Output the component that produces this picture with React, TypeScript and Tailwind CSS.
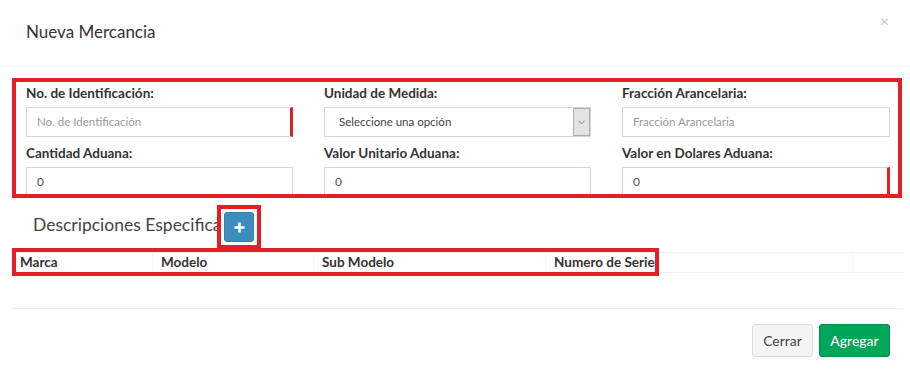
import { ChevronDown } from "lucide-react";

const RED = "border-[#e41e26]";

function Field({
  label,
  value,
  placeholder,
  flagged,
}: {
  label: string;
  value?: string;
  placeholder?: string;
  flagged?: boolean;
}) {
  return (
    <div className="flex flex-col">
      <label className="h-[18px] leading-[18px] text-[13.5px] font-bold text-[#333]">
        {label}
      </label>
      <div
        className={
          "mt-[5px] h-[30px] flex items-center px-[10px] border border-[#d2d6de] bg-white " +
          (flagged ? "border-r-[3px] border-r-[#e41e26]" : "")
        }
      >
        {value ? (
          <span className="text-[12px] text-[#555]">{value}</span>
        ) : (
          <span className="text-[11.5px] text-[#999]">{placeholder}</span>
        )}
      </div>
    </div>
  );
}

function SelectField({ label }: { label: string }) {
  return (
    <div className="flex flex-col">
      <label className="h-[18px] leading-[18px] text-[13.5px] font-bold text-[#333]">
        {label}
      </label>
      <div className="mt-[5px] h-[30px] flex items-stretch border border-[#d2d6de] bg-white">
        <span className="flex-1 flex items-center pl-[14px] text-[11.5px] text-[#444]">
          Seleccione una opción
        </span>
        <span className="w-[17px] flex items-center justify-center bg-[#e3e3e3] border border-[#adadad]">
          <ChevronDown size={11} strokeWidth={1.5} className="text-[#555]" />
        </span>
      </div>
    </div>
  );
}

const columns = [
  { name: "Marca", w: "w-[140px]" },
  { name: "Modelo", w: "w-[161px]" },
  { name: "Sub Modelo", w: "w-[232px]" },
  { name: "Numero de Serie", w: "w-[114px]" },
  { name: "", w: "w-[193px]" },
  { name: "", w: "flex-1" },
];

export default function App() {
  return (
    <div
      className="relative w-[910px] h-[369px] overflow-hidden bg-white text-[#333]"
      style={{ fontFamily: "Lato, 'Open Sans', sans-serif" }}
    >
      {/* modal header */}
      <div className="h-[67px] flex items-center px-[26px] pb-[3px] border-b border-[#f4f4f4]">
        <h4 className="text-[17px] text-[#333]">Nueva Mercancia</h4>
      </div>
      <span className="absolute right-[21px] top-[9px] text-[16px] text-[#c4c4c4]">×</span>

      {/* form */}
      <div className={"mt-[11px] ml-[12px] w-[890px] border-4 " + RED}>
        <div className="h-[112px] overflow-hidden pl-[10px] pt-[2px]">
          <div className="grid grid-cols-[267px_267px_268px] gap-x-[31px] gap-y-[7px]">
            <Field label="No. de Identificación:" placeholder="No. de Identificación" flagged />
            <SelectField label="Unidad de Medida:" />
            <Field label="Fracción Arancelaria:" placeholder="Fracción Arancelaria" />
            <Field label="Cantidad Aduana:" value="0" />
            <Field label="Valor Unitario Aduana:" value="0" />
            <Field label="Valor en Dolares Aduana:" value="0" flagged />
          </div>
        </div>
      </div>

      {/* descripciones */}
      <div className="mt-[7px] flex items-start pl-[33px]">
        <span className="w-[184px] h-[44px] pb-[4px] flex items-center whitespace-nowrap text-[17.5px] text-[#444]">
          Descripciones Especificas
        </span>
        <div className={"relative z-10 bg-white border-4 p-[3px] " + RED}>
          <button className="w-[30px] h-[30px] flex items-center justify-center rounded-[3px] bg-[#3c8dbc] border border-[#367fa9]">
            <svg width="11" height="11" viewBox="0 0 11 11">
              <path d="M5.5 0.5v10M0.5 5.5h10" stroke="#fff" strokeWidth="2.6" />
            </svg>
          </button>
        </div>
      </div>

      {/* table */}
      <div className="relative mt-[-1px] ml-[12px] w-[891px] pt-[4px]">
        <div className="flex h-[21px] border-t border-b border-[#f0f0f0]">
          {columns.map((c, i) => (
            <div
              key={i}
              className={
                c.w +
                " flex items-center pl-[8px] text-[13.5px] font-bold text-[#333] whitespace-nowrap " +
                (i > 0 ? "border-l border-[#f4f4f4]" : "")
              }
            >
              {c.name}
            </div>
          ))}
        </div>
        <div className="h-[36px] border-b border-[#eeeeee]" />
        <div className={"absolute left-0 top-0 w-[647px] h-[28px] border-4 " + RED} />
      </div>

      {/* footer */}
      <div className="flex justify-end gap-[6px] pr-[20px] pt-[15px]">
        <button className="w-[61px] h-[33px] rounded-[3px] bg-[#f4f4f4] border border-[#ddd] text-[14px] text-[#444]">
          Cerrar
        </button>
        <button className="w-[71px] h-[33px] rounded-[3px] bg-[#00a65a] border border-[#008d4c] text-[14px] text-white">
          Agregar
        </button>
      </div>
    </div>
  );
}
